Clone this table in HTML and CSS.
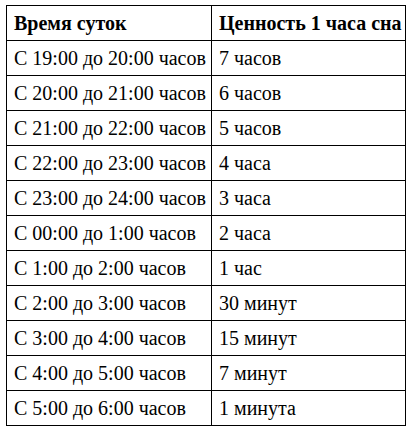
FILE: index.html
```html
<!DOCTYPE html>
<html lang="ru">
<head>
<meta charset="utf-8">
<link rel="stylesheet" href="styles.css">
</head>
<body>
<table class="sleep">
  <colgroup><col class="c1"><col class="c2"></colgroup>
  <thead>
    <tr><th>Время суток</th><th>Ценность 1 часа сна</th></tr>
  </thead>
  <tbody>
    <tr><td>С 19:00 до 20:00 часов</td><td>7 часов</td></tr>
    <tr><td>С 20:00 до 21:00 часов</td><td>6 часов</td></tr>
    <tr><td>С 21:00 до 22:00 часов</td><td>5 часов</td></tr>
    <tr><td>С 22:00 до 23:00 часов</td><td>4 часа</td></tr>
    <tr><td>С 23:00 до 24:00 часов</td><td>3 часа</td></tr>
    <tr><td>С 00:00 до 1:00 часов</td><td>2 часа</td></tr>
    <tr><td>С 1:00 до 2:00 часов</td><td>1 час</td></tr>
    <tr><td>С 2:00 до 3:00 часов</td><td>30 минут</td></tr>
    <tr><td>С 3:00 до 4:00 часов</td><td>15 минут</td></tr>
    <tr><td>С 4:00 до 5:00 часов</td><td>7 минут</td></tr>
    <tr><td>С 5:00 до 6:00 часов</td><td>1 минута</td></tr>
  </tbody>
</table>
</body>
</html>
```
FILE: styles.css
```css
html, body {
  margin: 0;
  background: #fff;
}
body {
  padding: 5px 0 0 6px;
  font-family: "Liberation Serif", "DejaVu Serif", serif;
  font-size: 20px;
  color: #000;
}
.sleep {
  border-collapse: collapse;
  table-layout: fixed;
  width: 399px;
}
.sleep .c1 { width: 205px; }
.sleep .c2 { width: 194px; }
.sleep th, .sleep td {
  border: 1px solid #000;
  height: 35px;
  padding: 0 4px 0 7px;
  text-align: left;
  vertical-align: middle;
  white-space: nowrap;
  box-sizing: border-box;
  font-family: "Liberation Serif", "DejaVu Serif", serif;
  font-size: 20px;
}
.sleep th {
  font-weight: bold;
}
```
